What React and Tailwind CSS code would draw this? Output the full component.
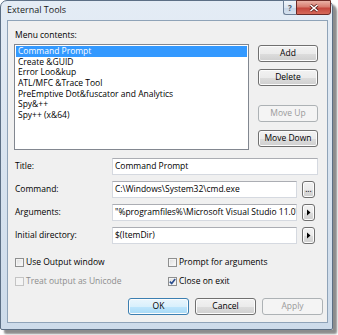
import clsx from 'clsx';

const items = [
  'Command Prompt',
  'Create &GUID',
  'Error Loo&kup',
  'ATL/MFC &Trace Tool',
  'PreEmptive Dot&fuscator and Analytics',
  'Spy&++',
  'Spy++ (x&64)',
];

function Btn({ children, variant = 'normal', className = '' }) {
  const styles = {
    normal:
      'border-[#707070] bg-[linear-gradient(to_bottom,#f2f2f2_0%,#ebebeb_50%,#dddddd_51%,#cfcfcf_100%)] text-black shadow-[inset_0_0_0_1px_#fcfcfc]',
    default:
      'border-[#3c7fb1] bg-[linear-gradient(to_bottom,#eaf6fd_0%,#d9f0fc_50%,#bee6fd_51%,#a7d9f5_100%)] text-black shadow-[inset_0_0_0_1px_#fcfcfc]',
    disabled: 'border-[#adb2b5] bg-[#f4f4f4] text-[#9a9a9a]',
  };
  return (
    <button
      className={clsx(
        'flex h-[17px] shrink-0 items-center justify-center rounded-[3px] border text-[8.5px] leading-none',
        styles[variant],
        className
      )}
    >
      {children}
    </button>
  );
}

function Field({ value, className = '' }) {
  return (
    <div
      className={clsx(
        'flex h-[17px] items-center overflow-hidden whitespace-nowrap border border-[#d5d9e0] border-t-[#abadb3] bg-white pl-[2px] text-[8.5px]',
        className
      )}
    >
      {value}
    </div>
  );
}

function Arrow() {
  return (
    <svg width="5" height="7" viewBox="0 0 5 7">
      <path d="M1 0.5 L4.5 3.5 L1 6.5 Z" fill="#000" />
    </svg>
  );
}

function Check({ label, checked = false, disabled = false, className = '' }) {
  return (
    <div className={clsx('flex h-[12px] items-center', className)}>
      <div
        className={clsx(
          'mr-[2px] flex h-[9px] w-[9px] items-center justify-center border',
          disabled
            ? 'border-[#c4c4c4] bg-[#f4f4f4]'
            : 'border-[#8e8f8f] bg-[linear-gradient(to_bottom_right,#dcdcdc,#fbfbfb)] shadow-[inset_0_0_0_1px_#f4f4f4]'
        )}
      >
        {checked && (
          <svg width="7" height="7" viewBox="0 0 7 7">
            <path d="M0.8 3.6 L2.7 5.6 L6.2 1" fill="none" stroke="#2c4f8f" strokeWidth="1.6" />
          </svg>
        )}
      </div>
      <span className={clsx('text-[8.5px] leading-none', disabled ? 'text-[#8d8d8d]' : 'text-black')}>{label}</span>
    </div>
  );
}

export default function App() {
  return (
    <div className="h-[335px] w-[338px] bg-white font-['Open_Sans',sans-serif] text-black">
      <div className="flex h-[330px] w-[333px] flex-col rounded-t-[7px] rounded-b-[2px] border border-[#5c6f85] bg-[linear-gradient(to_bottom,#e4ecf5,#cddbea)] shadow-[4px_4px_2px_rgba(0,0,0,0.45)]">
        {/* title bar */}
        <div className="flex h-[19px] shrink-0 items-start justify-between">
          <span className="pl-[6px] pt-[3px] text-[9px] leading-[11px] text-[#1a1a1a]">External Tools</span>
          <div className="-mt-[1px] mr-[1px] flex">
            <div className="flex h-[15px] w-[13px] items-center justify-center rounded-bl-[3px] border border-r-0 border-[#6d7f96] bg-[linear-gradient(to_bottom,#f2f6fb_0%,#dbe5f1_50%,#c5d4e6_51%,#d6e2ef_100%)] text-[8px] font-bold leading-none text-[#4a5a6e]">
              ?
            </div>
            <div className="flex h-[15px] w-[35px] items-center justify-center rounded-br-[3px] border border-[#6b2a26] bg-[linear-gradient(to_bottom,#eab2a6_0%,#d87d70_45%,#c4473d_55%,#d66a5a_100%)]">
              <svg width="10" height="8" viewBox="0 0 10 8">
                <path d="M1.5 1 L8.5 7 M8.5 1 L1.5 7" stroke="#5a1e1a" strokeWidth="3" />
                <path d="M1.5 1 L8.5 7 M8.5 1 L1.5 7" stroke="#fff" strokeWidth="1.6" />
              </svg>
            </div>
          </div>
        </div>

        {/* client area */}
        <div className="mb-[6px] ml-[6px] mr-[4px] flex h-[303px] w-[321px] flex-col border border-[#8fa3b8] bg-[#f0f0f0]">
          <div className="mt-[8px] pl-[7px] text-[8.5px] leading-[12px]">Menu contents:</div>

          <div className="mt-[3px] flex pl-[6px]">
            <div className="h-[106px] w-[235px] border border-[#828790] bg-white py-[1px] pl-[1px] pr-[1px]">
              {items.map((item, i) => (
                <div
                  key={item}
                  className={clsx(
                    'h-[10.67px] whitespace-nowrap pl-[2px] text-[8.5px] leading-[10.67px]',
                    i === 0 ? 'bg-[#3399ff] text-white' : 'text-black'
                  )}
                >
                  {item}
                </div>
              ))}
            </div>
            <div className="ml-[9px] flex w-[60px] flex-col pt-[1px]">
              <Btn>Add</Btn>
              <Btn className="mt-[7px]">Delete</Btn>
              <Btn variant="disabled" className="mt-[19px]">Move Up</Btn>
              <Btn className="mt-[8px]">Move Down</Btn>
            </div>
          </div>

          <div className="mt-[8px] flex flex-col gap-[6px] pl-[7px]">
            <div className="flex h-[17px] items-center">
              <span className="w-[97px] text-[8.5px]">Title:</span>
              <Field value="Command Prompt" className="w-[206px]" />
            </div>
            <div className="flex h-[17px] items-center">
              <span className="w-[97px] text-[8.5px]">Command:</span>
              <Field value="C:\Windows\System32\cmd.exe" className="w-[185px]" />
              <Btn className="ml-[5px] w-[13px] text-[7px]">...</Btn>
            </div>
            <div className="flex h-[17px] items-center">
              <span className="w-[97px] text-[8.5px]">Arguments:</span>
              <Field value={'"%programfiles%\\Microsoft Visual Studio 11.0\\C'} className="w-[185px]" />
              <Btn className="ml-[5px] w-[13px]">
                <Arrow />
              </Btn>
            </div>
            <div className="flex h-[17px] items-center">
              <span className="w-[97px] text-[8.5px]">Initial directory:</span>
              <Field value="$(ItemDir)" className="w-[185px]" />
              <Btn className="ml-[5px] w-[13px]">
                <Arrow />
              </Btn>
            </div>
          </div>

          <div className="mt-[12px] flex pl-[7px]">
            <Check label="Use Output window" className="w-[153px]" />
            <Check label="Prompt for arguments" />
          </div>
          <div className="mt-[7px] flex pl-[7px]">
            <Check label="Treat output as Unicode" disabled className="w-[153px]" />
            <Check label="Close on exit" checked />
          </div>

          <div className="mt-[11px] flex justify-end gap-[6px] pr-[4px]">
            <Btn variant="default" className="w-[61px]">OK</Btn>
            <Btn className="w-[61px]">Cancel</Btn>
            <Btn variant="disabled" className="w-[61px]">Apply</Btn>
          </div>
        </div>
      </div>
    </div>
  );
}
